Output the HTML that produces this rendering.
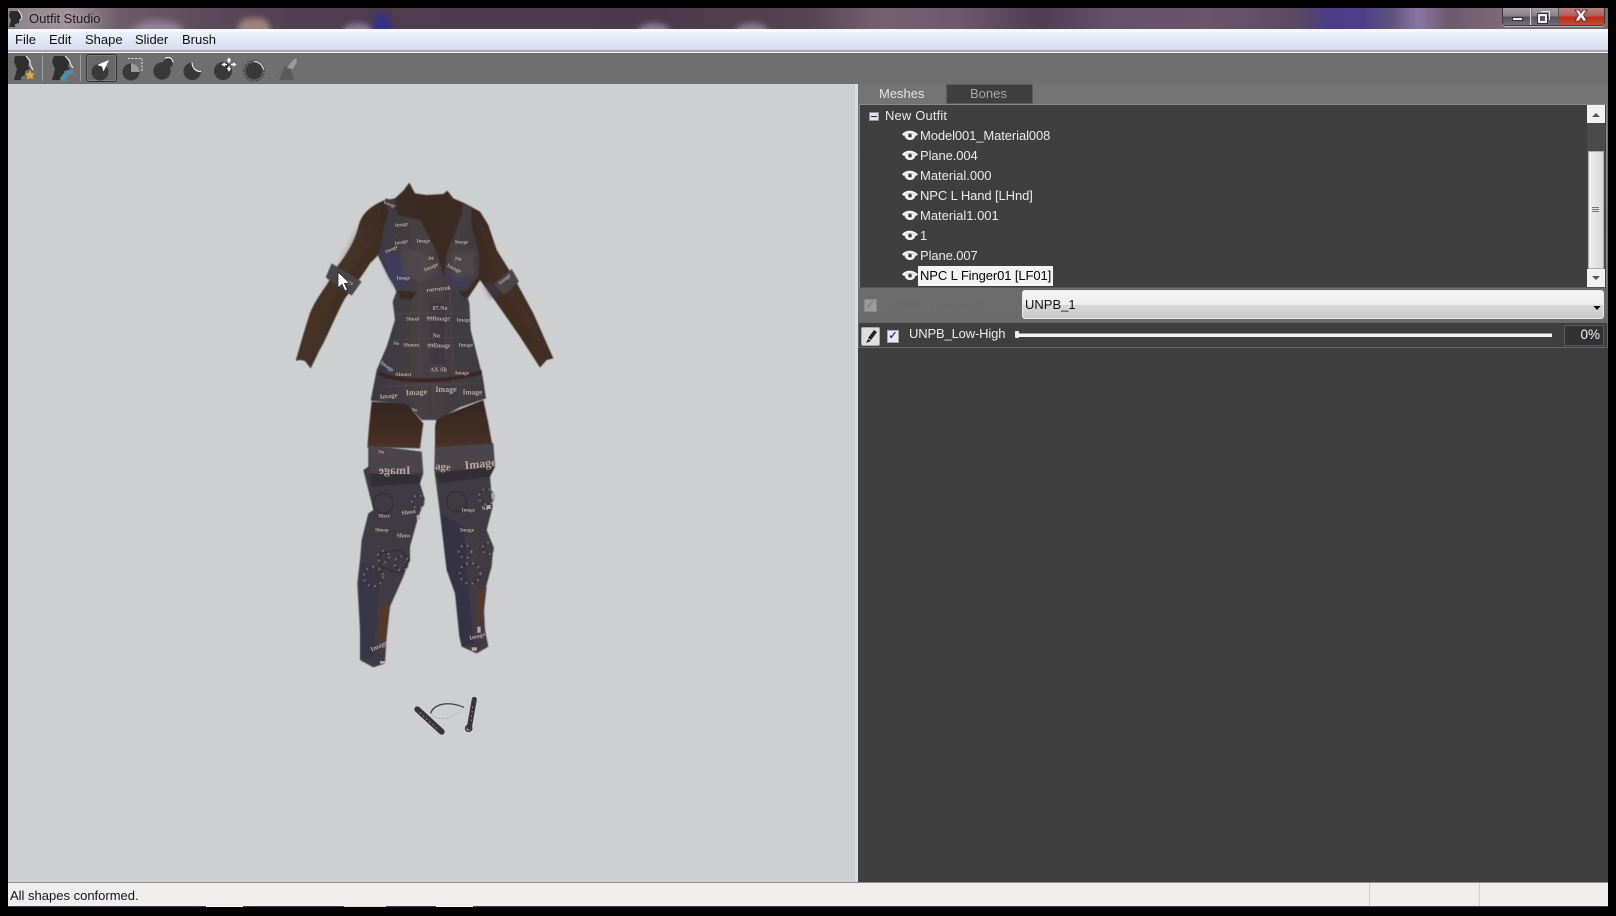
<!DOCTYPE html>
<html><head><meta charset="utf-8"><title>Outfit Studio</title>
<style>
html,body{margin:0;padding:0;background:#000;width:1616px;height:916px;overflow:hidden}
body{position:relative;font-family:"Liberation Sans",sans-serif;font-size:13px}
div,span{position:absolute;box-sizing:border-box}
.t{white-space:nowrap;line-height:20px;height:20px}
.row{color:#eaeaea;left:920px;letter-spacing:-.1px}
svg{position:absolute;left:0;top:0}
</style></head><body>

<!-- title bar -->
<div style="left:8px;top:8px;width:1600px;height:21px;overflow:hidden;background:linear-gradient(90deg,#8d8287 0,#a09498 60px,#6d5d68 110px,#5b4a59 200px,#4e3e4f 300px,#4d3c4d 480px,#4a3a4a 640px,#54444f 800px,#75606f 870px,#6f5a6c 950px,#4f3c50 1030px,#64506a 1100px,#6a556a 1200px,#5b4862 1290px,#4c3c86 1320px,#4c3f8a 1355px,#62537e 1385px,#8b76a5 1410px,#6c5a6c 1440px,#806a78 1500px,#7c6a74 1600px)">
  <div style="left:125px;top:13px;width:50px;height:20px;border-radius:50%;background:#a894ad;filter:blur(4px);opacity:.75"></div>
  <div style="left:230px;top:10px;width:32px;height:24px;border-radius:40%;background:#a98c86;filter:blur(3px);opacity:.85"></div>
  <div style="left:335px;top:15px;width:30px;height:16px;border-radius:50%;background:#9c8cab;filter:blur(3px);opacity:.75"></div>
  <div style="left:365px;top:5px;width:18px;height:24px;border-radius:50%;background:#2f2f8f;filter:blur(3px);opacity:.85"></div>
  <div style="left:630px;top:15px;width:32px;height:16px;border-radius:50%;background:#9c8cab;filter:blur(3px);opacity:.75"></div>
  <div style="left:728px;top:15px;width:32px;height:16px;border-radius:50%;background:#9c8cab;filter:blur(3px);opacity:.75"></div>
</div>
<svg width="1616" height="916" style="z-index:2">
  <path d="M10 11h8l2 3 1 2 1 3-3 1v3l-4 1v3h-6l2-7-2-4z" fill="#2c2c2c"/>
  <path d="M18 10l3 4 1 4-2 2" fill="none" stroke="#eee" stroke-width="1"/>
</svg>
<div class="t" style="left:29px;top:9px;color:#1c1c22;z-index:2;text-shadow:0 0 5px #b9aab0">Outfit Studio</div>

<!-- window buttons -->
<div style="left:1502px;top:8px;width:103px;height:18px;border:1px solid #3d3840;border-top:0;border-radius:0 0 4px 4px;overflow:hidden;z-index:3;box-shadow:0 1px 0 #bbb">
  <div style="left:0;top:0;width:28px;height:17px;background:linear-gradient(#a59ca4 0,#8a8088 45%,#56505a 55%,#75707c 100%);border-right:1px solid #d0ccd0"></div>
  <div style="left:29px;top:0;width:27px;height:17px;background:linear-gradient(#a59ca4 0,#8a8088 45%,#56505a 55%,#75707c 100%);border-right:1px solid #555"></div>
  <div style="left:56px;top:0;width:46px;height:17px;background:linear-gradient(#b9827e 0,#b0605a 45%,#c22a14 55%,#c24f36 100%)"></div>
  <div style="left:9px;top:9px;width:11px;height:4px;background:#eee;border:1px solid #333"></div>
  <div style="left:35px;top:6px;width:9px;height:9px;background:none;border:2px solid #eee;outline:1px solid #333"></div>
  <div style="left:38px;top:3px;width:9px;height:9px;border:1px solid #ddd;border-left:0;border-bottom:0"></div>
</div>
<svg width="1616" height="916" style="z-index:4">
  <path d="M1575 10h4l2 3 2-3h4l-3.500 5 3.500 6h-4l-2-3-2 3h-4l3.500-6z" fill="#f0eeee" stroke="#4a2a2a" stroke-width=".8"/>
</svg>

<!-- menu -->
<div style="left:8px;top:29px;width:1600px;height:3px;background:#f6f7fb"></div>
<div style="left:8px;top:32px;width:1600px;height:18px;background:linear-gradient(#eef1f9,#d6dcef)"></div>
<div style="left:8px;top:50px;width:1600px;height:2px;background:#a8a8a8"></div>
<div style="left:8px;top:52px;width:1600px;height:1px;background:#f2f2f2"></div>
<div class="t" style="left:15px;top:30px;color:#111">File</div>
<div class="t" style="left:49px;top:30px;color:#111">Edit</div>
<div class="t" style="left:85px;top:30px;color:#111">Shape</div>
<div class="t" style="left:135px;top:30px;color:#111">Slider</div>
<div class="t" style="left:182px;top:30px;color:#111">Brush</div>

<!-- toolbar -->
<div style="left:8px;top:53px;width:1600px;height:31px;background:#6f6f6f"></div>
<div style="left:42px;top:55px;width:1px;height:26px;background:#a0a0a0"></div>
<div style="left:80px;top:55px;width:1px;height:26px;background:#a0a0a0"></div>
<div style="left:86px;top:54px;width:31px;height:28px;border:1px solid #333;border-radius:3px;background:#676767;box-shadow:inset 0 0 0 1px #7c7c7c"></div>

<svg width="1616" height="916" style="z-index:2">
  <path d="M15 56h11l3 5-1 5 2 3-5 2v4l-4 2v3H14l3-11-3-7z" fill="#2f2f2f"/>
  <path d="M26 56l4 5 0 3 3 6" fill="none" stroke="#e8e8e8" stroke-width="1.200"/>
  <path d="M30 70l1.500 3.300 3.500.4-2.600 2.300.8 3.500-3.200-1.800-3.200 1.800.8-3.500-2.600-2.300 3.500-.4z" fill="#e0a93c"/>
  <path d="M54 56h11l4 6-1 5 2 2-6 2v4l-4 2v3H52l3-11-3-7z" fill="#2f2f2f"/>
  <path d="M65 56l4 4 2 5 2 3" fill="none" stroke="#e8e8e8" stroke-width="1.200"/>
  <path d="M61 81c0-7 4-10 11-11l2 3c-5 1-8 3-8 8z" fill="#4b91b3"/>
  <circle cx="100" cy="72" r="8.500" fill="#393939"/>
  <path d="M109 60l-12 5 5 1.500 1.500 5z" fill="#fff"/>
  <circle cx="131" cy="72" r="8.500" fill="#393939"/>
  <path d="M131 63.500a8.500 8.500 0 0 1 8.500 8.500h-8.500z" fill="#9b9b9b"/>
  <path d="M128 58.500h14v13" fill="none" stroke="#e8e8e8" stroke-dasharray="2 1.500"/>
  <circle cx="162" cy="71" r="8.700" fill="#393939"/>
  <circle cx="168" cy="63" r="5" fill="#393939"/>
  <path d="M165 58.500a5 5 0 0 1 8 4" fill="none" stroke="#fff" stroke-width="1"/>
  <path d="M192 62.500a8.800 8.800 0 1 0 9 9.500c-5 1-9-3-9-9.500z" fill="#393939"/>
  <path d="M192 62.500c0 5 3.500 9 9 9" fill="none" stroke="#fff" stroke-width="1"/>
  <circle cx="223" cy="71" r="9" fill="#393939"/>
  <path d="M229 59v4M227.500 61l1.500-2.500 1.500 2.500M229 70v-4M227.500 68l1.500 2.500 1.500-2.500M223 64.500h4M225 63l-2.500 1.500 2.500 1.500M235 64.500h-4M233 63l2.500 1.500-2.500 1.500" fill="none" stroke="#fff" stroke-width="1.300"/>
  <circle cx="254" cy="71" r="8.500" fill="#393939"/>
  <circle cx="254" cy="71" r="10" fill="none" stroke="#393939" stroke-width="2" stroke-dasharray="1 1.500"/>
  <path d="M254 61.500a9.500 9.500 0 0 1 9.500 8" fill="none" stroke="#e5e5e5" stroke-width="1"/>
  <path d="M285 66l5 2 4 12H279z" fill="#5b5b5b"/>
  <path d="M287 68l5-7 4-3 1 4-4 7z" fill="#9a9a9a"/>
</svg>

<!-- viewport -->
<div style="left:8px;top:84px;width:847px;height:798px;background:#cdcfd1"></div>

<!-- sash -->
<div style="left:855px;top:84px;width:3px;height:798px;background:#dcdcdc"></div>

<!-- right panel -->
<div style="left:858px;top:84px;width:750px;height:240px;background:linear-gradient(#747474,#6b6b6b)"></div>
<div style="left:858px;top:322px;width:750px;height:560px;background:#3f3f3f"></div>

<!-- tabs -->
<div class="t" style="left:879px;top:84px;color:#e2e2e2">Meshes</div>
<div style="left:946px;top:84px;width:87px;height:20px;background:#3f3f3f;border:1px solid #5b5b5b"></div>
<div class="t" style="left:970px;top:84px;color:#a8a8a8">Bones</div>

<!-- tree -->
<div style="left:859px;top:104px;width:748px;height:184px;background:#3f3f3f;border:1px solid #8a8a8a;border-bottom-color:#555"></div>
<div style="left:869px;top:112px;width:10px;height:9px;background:#dfe3ea;border:1px solid #8890a0"></div>
<div style="left:871px;top:116px;width:6px;height:1px;background:#223"></div>
<div class="t" style="left:885px;top:106px;color:#eaeaea;letter-spacing:.15px">New Outfit</div>
<div class="t row" style="top:126px">Model001_Material008</div>
<div class="t row" style="top:146px">Plane.004</div>
<div class="t row" style="top:166px;letter-spacing:0">Material.000</div>
<div class="t row" style="top:186px">NPC L Hand [LHnd]</div>
<div class="t row" style="top:206px;letter-spacing:0">Material1.001</div>
<div class="t row" style="top:226px">1</div>
<div class="t row" style="top:246px">Plane.007</div>
<div style="left:918px;top:266px;width:135px;height:20px;background:#f4f4f4"></div>
<div class="t row" style="top:266px;color:#000">NPC L Finger01 [LF01]</div>
<svg width="1616" height="916" style="z-index:2">
  <defs><g id="eye"><path d="M0 0.500C3-4.500 12-4.500 16 0.500L14 2C11-2 5-2 2 2z" fill="#f2f2f2"/><path d="M2.500 1.500c2-2.800 9-2.800 11 0-1 3.500-3 4.500-5.500 4.500s-4.500-1-5.500-4.500z" fill="#f2f2f2"/><circle cx="8" cy="1.700" r="1.800" fill="#3f3f3f"/></g></defs>
  <use href="#eye" x="902" y="134"/><use href="#eye" x="902" y="154"/><use href="#eye" x="902" y="174"/><use href="#eye" x="902" y="194"/><use href="#eye" x="902" y="214"/><use href="#eye" x="902" y="234"/><use href="#eye" x="902" y="254"/><use href="#eye" x="902" y="274"/>
</svg>

<!-- scrollbar -->
<div style="left:1587px;top:105px;width:18px;height:182px;background:#4a4a4a"></div>
<div style="left:1587px;top:105px;width:18px;height:18px;background:#f1f1f1"></div>
<div style="left:1587px;top:269px;width:18px;height:18px;background:#f1f1f1"></div>
<div style="left:1588px;top:151px;width:16px;height:118px;background:linear-gradient(90deg,#efefef,#d8d8d8);border:1px solid #aaa"></div>
<div style="left:1592px;top:207px;width:7px;height:1px;background:#777;box-shadow:0 2px 0 #777,0 4px 0 #777"></div>
<svg width="1616" height="916" style="z-index:2">
  <path d="M1592 117l4-4 4 4z" fill="#555"/>
  <path d="M1592 276l4 4 4-4z" fill="#555"/>
</svg>

<!-- dropdown row -->
<div style="left:864px;top:299px;width:13px;height:13px;background:#9b9b9b;border:1px solid #888;color:#777;font-size:11px;line-height:11px;text-align:center">✓</div>
<div class="t" style="left:886px;top:296px;color:#6a6a6a">UNPB_Low-High</div>
<div style="left:1022px;top:290px;width:582px;height:29px;border-radius:3px;background:linear-gradient(#f4f4f4 0,#eee 50%,#d8d8d8 52%,#cbcbcb 100%);border:1px solid #e9e9e9"></div>
<div class="t" style="left:1025px;top:295px;color:#111">UNPB_1</div>
<svg width="1616" height="916" style="z-index:2"><path d="M1593.500 306h7l-3.500 4z" fill="#000"/></svg>

<!-- slider row -->
<div style="left:858px;top:322px;width:750px;height:26px;background:#3f3f3f;border:1px solid #666"></div>
<div style="left:861px;top:327px;width:19px;height:19px;border-radius:2px;background:#dedede;border:1px solid #aaa"></div>
<svg width="1616" height="916" style="z-index:2">
  <path d="M868 338l6-8 3 2-6 8z" fill="#222"/><path d="M866 343l2-4 3 2z" fill="#222"/>
</svg>
<div style="left:887px;top:330px;width:12px;height:13px;background:#e8e8f0;border:1px solid #9aa;color:#224488;font-size:11px;line-height:11px;text-align:center;font-weight:bold">✓</div>
<div class="t" style="left:909px;top:324px;color:#eaeaea;letter-spacing:-.15px">UNPB_Low-High</div>
<div style="left:1019px;top:333px;width:533px;height:4px;background:#f4f4f4;border-top:1px solid #9a9a9a"></div>
<div style="left:1015px;top:331px;width:4px;height:7px;background:#ececec;border-radius:1px"></div>
<div style="left:1564px;top:325px;width:40px;height:21px;background:#323232;border:1px solid #5a5a5a"></div>
<div class="t" style="left:1564px;top:325px;width:36px;text-align:right;color:#eef3ff;font-size:13.5px">0%</div>

<!-- status -->
<div style="left:8px;top:882px;width:1600px;height:1px;background:#8c8c8c"></div>
<div style="left:8px;top:883px;width:1600px;height:23px;background:#f0eeed"></div>
<div style="left:1369px;top:883px;width:1px;height:23px;background:#cfcfcf"></div>
<div style="left:1479px;top:883px;width:1px;height:23px;background:#cfcfcf"></div>
<div class="t" style="left:10px;top:886px;color:#15151f">All shapes conformed.</div>
<div style="left:8px;top:906px;width:1600px;height:1px;background:#4b3c50"></div>
<div style="left:206px;top:906px;width:37px;height:1px;background:#fff"></div>
<div style="left:344px;top:906px;width:42px;height:1px;background:#ddd"></div>
<div style="left:436px;top:906px;width:37px;height:1px;background:#fff"></div>

<!-- model -->
<svg width="1616" height="916" style="z-index:1">
<defs>
  <linearGradient id="sk" x1="0" x2="1" y1="0" y2="0"><stop offset="0" stop-color="#463226"/><stop offset=".5" stop-color="#3b2a22"/><stop offset="1" stop-color="#432f25"/></linearGradient>
  <linearGradient id="th" x1="0" x2="0" y1="0" y2="1"><stop offset="0" stop-color="#352620"/><stop offset="1" stop-color="#483126"/></linearGradient>
  <linearGradient id="cl" x1="0" x2="1" y1="0" y2="0"><stop offset="0" stop-color="#3a3742"/><stop offset=".45" stop-color="#484144"/><stop offset="1" stop-color="#3f3a3f"/></linearGradient>
  <filter id="sb"><feGaussianBlur stdDeviation="6"/></filter>
  <filter id="soft"><feGaussianBlur stdDeviation="1.200"/></filter>
</defs>
<g transform="translate(280,170) scale(.33333)">
 <g filter="url(#soft)">
  <path fill="url(#sk)" d="M310 92L345 85L370 62L388 38L405 70L440 75L490 72L502 62L520 85L555 100L600 125L625 165L650 240L700 320L760 430L820 565L800 570L780 593L720 500L640 385L600 330L560 390L360 390L300 250L270 280C245 320 220 350 195 385C170 430 150 480 130 520C115 545 105 570 92 595L75 573L62 570L47 572C60 530 70 490 85 445C95 410 115 380 140 345L175 285C195 260 225 215 235 170C245 130 270 110 310 92Z"/>
  <path fill="#4f3729" opacity=".25" filter="url(#sb)" d="M230 180L280 130L290 210L180 350L120 450L95 540L85 460L140 350Z"/>
  <path fill="#4f3729" opacity=".25" filter="url(#sb)" d="M590 130L630 210L670 300L770 470L800 550L750 480L650 320Z"/>
  <path fill="url(#th)" d="M275 695L380 700L430 760L420 835L262 832L268 760Z"/>
  <path fill="url(#th)" d="M470 745L610 690L625 760L637 825L465 835L465 770Z"/>
  <path fill="url(#cl)" d="M315 85L348 92L345 112L352 135L420 150L465 235L487 300L490 330L500 250L540 150L550 100L575 110L575 170L600 260L595 320L570 350L558 362L568 400L572 480L600 590L608 620L618 685L540 712L470 750L425 750L380 702L272 692L290 600L320 530L345 450L338 395L350 362L325 320L295 260L310 180L325 130Z"/>
  <path fill="#413e70" opacity=".55" filter="url(#sb)" d="M300 240L345 250L400 330L350 355L325 315Z"/>
  <path fill="#413e70" opacity=".5" filter="url(#sb)" d="M490 320L530 300L575 345L530 358Z"/>
  <path fill="#413e70" opacity=".45" filter="url(#sb)" d="M610 340L650 340L660 380L630 385Z"/>
  <path fill="#564d50" opacity=".6" filter="url(#sb)" d="M360 230L440 250L470 310L420 340L370 310Z"/>
  <path fill="#564d50" opacity=".6" filter="url(#sb)" d="M510 250L585 240L585 320L520 330Z"/>
  <path fill="#3a2a22" d="M355 362L410 365L395 390L360 385Z"/>
  <path fill="#3a2a22" d="M535 362L565 365L555 388Z"/>
  <path fill="#3a2820" d="M298 605C350 625 470 640 605 600L606 612C480 650 340 640 295 615Z"/>
  <path fill="#37343b" d="M450 400h45v180h-45z" opacity=".5"/>
  <path fill="#4b4448" d="M155 280L245 335L215 377L137 322Z"/>
  <path fill="#4b4448" d="M695 297L717 335L672 375L642 342Z"/>
  <g stroke="#847a7a" stroke-width="1" opacity=".45" fill="none">
    <path d="M330 180L440 280M540 150L520 300M360 260L470 230M420 340V620M510 360L520 640M350 430H560M330 510L580 500M300 650L610 640M375 640V690M460 640V700M540 640V690"/>
  </g>
 </g>
  <g font-family="Liberation Serif,serif" font-weight="bold" fill="#b9a7a2" font-size="20">
    <text x="300" y="687" transform="rotate(-6 300 687)">Image</text>
    <text x="378" y="676" transform="rotate(-3 378 676)" font-size="24">Image</text>
    <text x="466" y="666" font-size="24">Image</text>
    <text x="548" y="673" font-size="22">Image</text>
    <text x="442" y="533" font-size="18">99fimage</text>
    <text x="370" y="530" font-size="16">Shouot</text>
    <text x="536" y="530" font-size="16">Image</text>
    <text x="440" y="452" font-size="18">99fimage</text>
    <text x="378" y="452" font-size="16">Shoul</text>
    <text x="530" y="454" font-size="16">Image</text>
    <text x="458" y="420" font-size="18">07.No</text>
    <text x="458" y="502" font-size="18">No</text>
    <text x="440" y="366" font-size="18" transform="rotate(-6 440 366)">rorrotrok</text>
    <text x="300" y="580" font-size="17" transform="rotate(35 300 580)">Image</text>
    <text x="345" y="618" font-size="16">Almost</text>
    <text x="450" y="605" font-size="18">AX Sh</text>
    <text x="525" y="614" font-size="16">Image</text>
    <text x="340" y="525" font-size="14">No</text>
    <text x="345" y="170" font-size="15" transform="rotate(-6 345 170)">Image</text>
    <text x="345" y="225" font-size="15" transform="rotate(-12 345 225)">Image</text>
    <text x="410" y="218" font-size="15">Image</text>
    <text x="318" y="250" font-size="15" transform="rotate(-25 318 250)">Image</text>
    <text x="435" y="305" font-size="17" transform="rotate(-25 435 305)">Image</text>
    <text x="445" y="270" font-size="16">04</text>
    <text x="500" y="290" font-size="17" transform="rotate(25 500 290)">Image</text>
    <text x="525" y="220" font-size="15">Image</text>
    <text x="525" y="272" font-size="16">No</text>
    <text x="350" y="328" font-size="15">Image</text>
    <text x="310" y="100" font-size="14" transform="rotate(20 310 100)">Image</text>
    <text x="395" y="725" font-size="14">No</text>
    <text x="180" y="325" font-size="16" transform="rotate(30 180 325)">Image</text>
    <text x="660" y="345" font-size="16" transform="rotate(-40 660 345)">Image</text>
  </g>
</g>
<g transform="translate(340,430) scale(.33333)">
 <g filter="url(#soft)">
  <path fill="#3f3a42" d="M85 45L245 65L250 130L240 160L255 210L235 260L210 350L210 390L190 440L150 530L140 620L135 700L100 712L60 690L60 600L52 460L60 390L65 330L85 250L100 240L70 120L85 110Z"/>
  <path fill="#3f3a42" d="M285 50L460 40L465 110L450 140L458 230L440 300L460 350L455 410L430 500L435 600L445 650L410 670L365 650L358 620L345 490L320 420L300 250L283 120Z"/>
  <path fill="#4c4549" d="M88 48L245 65L248 128L90 130Z"/>
  <path fill="#4c4549" d="M287 52L460 42L463 108L286 125Z"/>
  <path fill="#33304a" opacity=".6" d="M60 390L120 430L100 690L60 680Z"/>
  <path fill="#302d48" opacity=".6" d="M300 250L370 290L400 640L365 650L345 490L320 420Z"/>
  <path fill="#302d36" d="M90 130L240 135L240 160L95 170Z"/>
  <path fill="#302d36" d="M285 130L465 110L450 140L300 160Z"/>
  <path fill="#54392a" d="M122 520L150 530L135 640L118 620Z"/>
  <path fill="#54392a" d="M415 480L440 470L430 560L412 590Z"/>
  <g fill="none" stroke="#26232a" stroke-width="3" opacity=".8">
    <circle cx="130" cy="220" r="30"/><circle cx="235" cy="215" r="18"/><path d="M120 370l60-10 30 30-30 40-60-20z"/><circle cx="100" cy="440" r="28"/><circle cx="130" cy="380" r="16"/><circle cx="185" cy="400" r="20"/>
    <circle cx="350" cy="215" r="30"/><circle cx="440" cy="200" r="22"/><circle cx="375" cy="365" r="18"/><circle cx="445" cy="355" r="16"/><circle cx="390" cy="430" r="30"/>
  </g>
  <g fill="none" stroke="#c9bcbc" stroke-width="3" stroke-dasharray="5 14" opacity=".8">
    <circle cx="235" cy="215" r="19"/><circle cx="130" cy="380" r="17"/><circle cx="185" cy="400" r="21"/><circle cx="440" cy="200" r="23"/><circle cx="375" cy="365" r="19"/><circle cx="445" cy="355" r="17"/><circle cx="100" cy="440" r="29"/><circle cx="390" cy="430" r="31"/>
  </g>
 </g>
  <g font-family="Liberation Serif,serif" font-weight="bold" fill="#b9a7a2">
    <text transform="translate(212,132) scale(-1,1)" font-size="36">Image</text>
    <text x="375" y="118" font-size="36" transform="rotate(-6 375 118)">Image</text>
    <text x="285" y="118" font-size="32" transform="rotate(5 285 118)">age</text>
    <text x="185" y="255" font-size="18" transform="rotate(-8 185 255)">Shoot</text>
    <text x="170" y="322" font-size="18">Show</text>
    <text x="105" y="305" font-size="16">Sheep</text>
    <text x="115" y="262" font-size="15">Mary</text>
    <text x="365" y="245" font-size="15">Image</text>
    <text x="360" y="305" font-size="16">Image</text>
    <text x="95" y="665" font-size="20" transform="rotate(-25 95 665)">Image</text>
    <text x="390" y="630" font-size="18" transform="rotate(-15 390 630)">Image</text>
    <text x="425" y="240" font-size="16">No</text>
    <text x="115" y="70" font-size="14">No</text>
  </g>
  <g fill="#b9a7a2">
    <rect x="412" y="590" width="10" height="18"/><rect x="120" y="693" width="16" height="8"/><rect x="395" y="652" width="16" height="10"/><rect x="230" y="255" width="10" height="14"/><rect x="440" y="225" width="12" height="12"/>
  </g>
  <path d="M232 838L305 905" stroke="#3a3438" stroke-width="18" stroke-linecap="round" fill="none"/>
  <path d="M403 808L388 892" stroke="#3a3438" stroke-width="15" stroke-linecap="round" fill="none"/>
  <circle cx="386" cy="895" r="9" fill="none" stroke="#3a3438" stroke-width="5"/>
  <path d="M272 850C280 825 320 810 372 832" stroke="#444" stroke-width="4" fill="none"/>
  <path d="M272 850C290 875 340 870 362 838" stroke="#777" stroke-width="1.500" stroke-dasharray="3 3" fill="none"/>
  <path d="M240 848L290 895M398 830L392 880" stroke="#bbb" stroke-width="2.500" stroke-dasharray="4 9" fill="none"/>
</g>
<path d="M338 272v16l4-3.500 3 6.500 2.500-1-3-6.500 5-.5z" fill="#fff" stroke="#222" stroke-width=".8"/>
</svg>
</body></html>
